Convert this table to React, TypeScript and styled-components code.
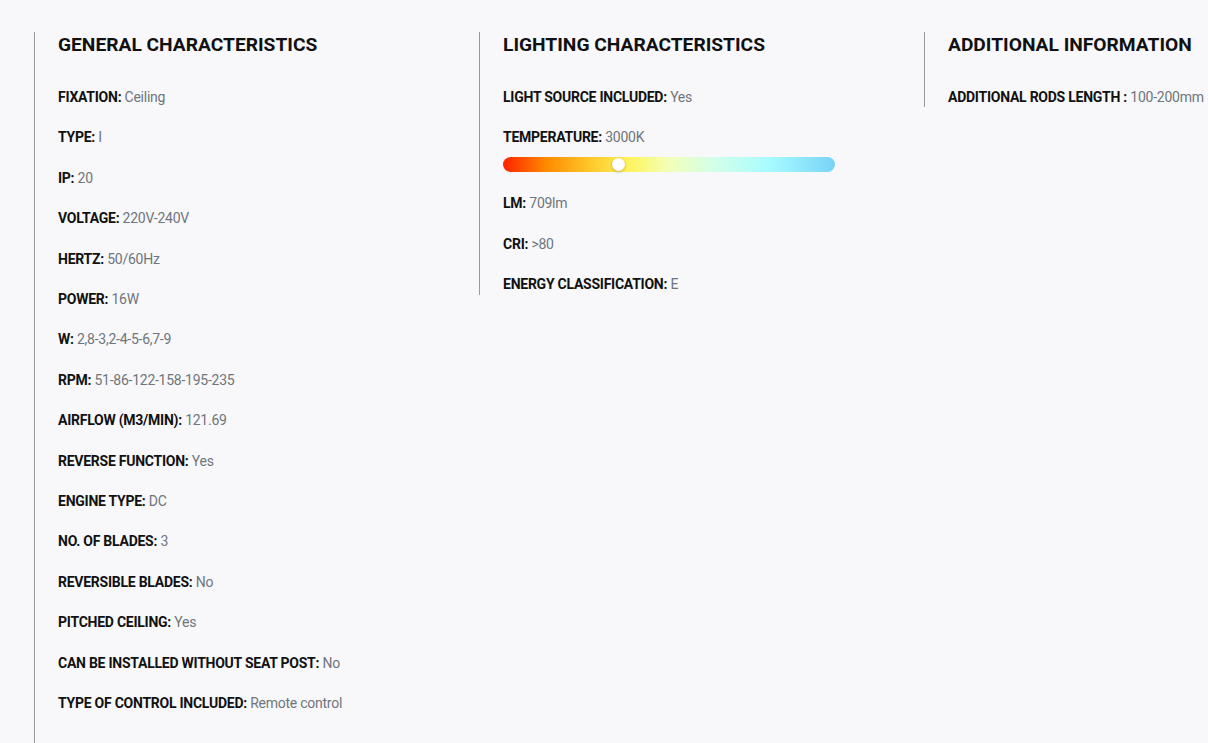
import React from 'react';
import { createGlobalStyle, styled } from 'styled-components';

type Spec = { label: string; value: string; scale?: number };
type Section = { title: string; specs: Spec[] };

const sections: Section[] = [
  {
    title: 'GENERAL CHARACTERISTICS',
    specs: [
      { label: 'FIXATION:', value: 'Ceiling' },
      { label: 'TYPE:', value: 'I' },
      { label: 'IP:', value: '20' },
      { label: 'VOLTAGE:', value: '220V-240V' },
      { label: 'HERTZ:', value: '50/60Hz' },
      { label: 'POWER:', value: '16W' },
      { label: 'W:', value: '2,8-3,2-4-5-6,7-9' },
      { label: 'RPM:', value: '51-86-122-158-195-235' },
      { label: 'AIRFLOW (M3/MIN):', value: '121.69' },
      { label: 'REVERSE FUNCTION:', value: 'Yes' },
      { label: 'ENGINE TYPE:', value: 'DC' },
      { label: 'NO. OF BLADES:', value: '3' },
      { label: 'REVERSIBLE BLADES:', value: 'No' },
      { label: 'PITCHED CEILING:', value: 'Yes' },
      { label: 'CAN BE INSTALLED WITHOUT SEAT POST:', value: 'No' },
      { label: 'TYPE OF CONTROL INCLUDED:', value: 'Remote control' },
    ],
  },
  {
    title: 'LIGHTING CHARACTERISTICS',
    specs: [
      { label: 'LIGHT SOURCE INCLUDED:', value: 'Yes' },
      { label: 'TEMPERATURE:', value: '3000K', scale: 34.5 },
      { label: 'LM:', value: '709lm' },
      { label: 'CRI:', value: '>80' },
      { label: 'ENERGY CLASSIFICATION:', value: 'E' },
    ],
  },
  {
    title: 'ADDITIONAL INFORMATION',
    specs: [{ label: 'ADDITIONAL RODS LENGTH :', value: '100-200mm' }],
  },
];

function App() {
  return (
    <>
      <GlobalStyle />
      <Page>
        <Columns>
          {sections.map((section, i) => (
            <Column key={section.title} $tall={i === 0}>
              <Heading>{section.title}</Heading>
              <SpecList>
                {section.specs.map((spec) => (
                  <SpecItem key={spec.label}>
                    <SpecRow>
                      <Label>{spec.label}</Label> <Value>{spec.value}</Value>
                    </SpecRow>
                    {spec.scale !== undefined && (
                      <TempBar>
                        <Knob style={{ left: `${spec.scale}%` }} />
                      </TempBar>
                    )}
                  </SpecItem>
                ))}
              </SpecList>
            </Column>
          ))}
        </Columns>
      </Page>
    </>
  );
}

export default App;

const GlobalStyle = createGlobalStyle`
  html, body {
    margin: 0;
    padding: 0;
    background: #f8f8fa;
    font-family: Roboto, "Liberation Sans", sans-serif;
    overflow: hidden;
  }
`;

const Page = styled.div`
  min-height: 743px;
  padding-top: 32px;
  padding-left: 34px;
  box-sizing: border-box;
`;

const Columns = styled.div`
  display: grid;
  grid-template-columns: repeat(3, 445px);
  align-items: start;
`;

const Column = styled.div<{ $tall: boolean }>`
  border-left: 1px solid #9a9a9a;
  padding-left: 23px;
  padding-bottom: ${({ $tall }) => ($tall ? '40px' : '0')};
  white-space: nowrap;
`;

const Heading = styled.h2`
  margin: 0;
  font-size: 19.2px;
  line-height: 26px;
  font-weight: 700;
  color: #111;
`;

const SpecList = styled.div`
  display: flex;
  flex-direction: column;
  gap: 20px;
  margin-top: 29px;
`;

const SpecItem = styled.div`
  display: flex;
  flex-direction: column;
`;

const SpecRow = styled.div`
  font-size: 14px;
  line-height: 20.4px;
  letter-spacing: -0.25px;
`;

const Label = styled.span`
  font-weight: 700;
  color: #111;
`;

const Value = styled.span`
  font-weight: 400;
  color: #6f757c;
`;

const TempBar = styled.div`
  position: relative;
  width: 332px;
  height: 15px;
  margin-top: 9px;
  margin-bottom: 1.5px;
  border-radius: 8px;
  background: linear-gradient(
    to right,
    #ff2200 0%,
    #ff8a00 13%,
    #ffc62a 26%,
    #fff45c 38%,
    #f2ffb8 50%,
    #d4ffe8 63%,
    #a8fcff 80%,
    #78d3f8 100%
  );
`;

const Knob = styled.span`
  position: absolute;
  top: 1px;
  width: 13px;
  height: 13px;
  margin-left: -6px;
  border-radius: 50%;
  background: #fff;
  box-shadow: 0 1px 3px rgba(0, 0, 0, 0.25);
`;
